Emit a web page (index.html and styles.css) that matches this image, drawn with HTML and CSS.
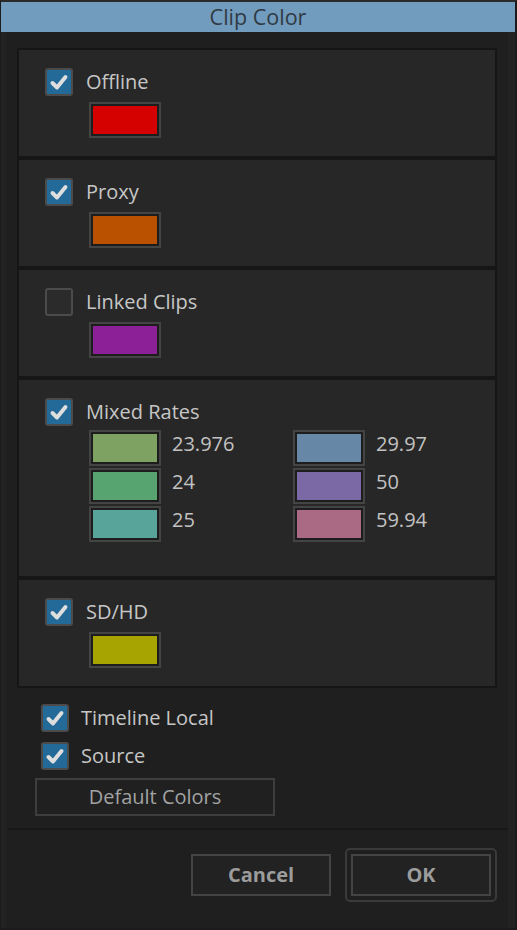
FILE: index.html
```html
<!DOCTYPE html>
<html>
<head>
<meta charset="utf-8">
<link rel="stylesheet" href="styles.css">
</head>
<body>
<div class="window">
  <div class="titlebar">Clip Color</div>
  <div class="body">
    <div class="sections">
      <div class="section">
        <div class="check-row">
          <span class="cb on"><svg viewBox="0 0 24 24"><path d="M5.5 13 L10 17.5 L18.5 7"/></svg></span>
          <span class="label">Offline</span>
        </div>
        <div class="swatch-row"><span class="swatch" style="background:#d50000"></span></div>
      </div>
      <div class="section">
        <div class="check-row">
          <span class="cb on"><svg viewBox="0 0 24 24"><path d="M5.5 13 L10 17.5 L18.5 7"/></svg></span>
          <span class="label">Proxy</span>
        </div>
        <div class="swatch-row"><span class="swatch" style="background:#b95100"></span></div>
      </div>
      <div class="section">
        <div class="check-row">
          <span class="cb"></span>
          <span class="label">Linked Clips</span>
        </div>
        <div class="swatch-row"><span class="swatch" style="background:#8c2097"></span></div>
      </div>
      <div class="section tall">
        <div class="check-row">
          <span class="cb on"><svg viewBox="0 0 24 24"><path d="M5.5 13 L10 17.5 L18.5 7"/></svg></span>
          <span class="label">Mixed Rates</span>
        </div>
        <div class="rates">
          <div class="rate"><span class="swatch" style="background:#7da262"></span><span class="rate-text">23.976</span></div>
          <div class="rate"><span class="swatch" style="background:#6787a7"></span><span class="rate-text">29.97</span></div>
          <div class="rate"><span class="swatch" style="background:#57a470"></span><span class="rate-text">24</span></div>
          <div class="rate"><span class="swatch" style="background:#7b69a6"></span><span class="rate-text">50</span></div>
          <div class="rate"><span class="swatch" style="background:#58a39a"></span><span class="rate-text">25</span></div>
          <div class="rate"><span class="swatch" style="background:#aa6a83"></span><span class="rate-text">59.94</span></div>
        </div>
      </div>
      <div class="section">
        <div class="check-row">
          <span class="cb on"><svg viewBox="0 0 24 24"><path d="M5.5 13 L10 17.5 L18.5 7"/></svg></span>
          <span class="label">SD/HD</span>
        </div>
        <div class="swatch-row"><span class="swatch" style="background:#a7a300"></span></div>
      </div>
    </div>
    <div class="options">
      <div class="check-row opt">
        <span class="cb on"><svg viewBox="0 0 24 24"><path d="M5.5 13 L10 17.5 L18.5 7"/></svg></span>
        <span class="label">Timeline Local</span>
      </div>
      <div class="check-row opt second">
        <span class="cb on"><svg viewBox="0 0 24 24"><path d="M5.5 13 L10 17.5 L18.5 7"/></svg></span>
        <span class="label">Source</span>
      </div>
      <div class="default-btn">Default Colors</div>
    </div>
    <div class="separator"></div>
    <div class="buttons">
      <div class="btn">Cancel</div>
      <div class="ok-ring"><div class="btn">OK</div></div>
    </div>
  </div>
</div>
</body>
</html>
```
FILE: styles.css
```css
* { box-sizing: border-box; }
html, body { margin: 0; padding: 0; }
body {
  background: #1f1f1f;
  font-family: "Open Sans", "Noto Sans", sans-serif;
  width: 517px;
  height: 930px;
  overflow: hidden;
}
.window {
  width: 517px;
  height: 930px;
  border-top: 2px solid #2a2a2a;
  border-left: 1px solid #1b1b1b;
  border-right: 2px solid #1a1a1a;
  border-bottom: 2px solid #1a1a1a;
  display: flex;
  flex-direction: column;
}
.titlebar {
  height: 30px;
  background: #729cbd;
  color: #2f3a45;
  font-size: 21.5px;
  line-height: 30px;
  text-align: center;
}
.body {
  flex: 1;
  background: #1f1f1f;
  border-left: 5px solid #222222;
  border-right: 7px solid #222222;
  padding-top: 16px;
  display: flex;
  flex-direction: column;
}
.sections {
  margin: 0 11px;
  display: flex;
  flex-direction: column;
}
.section {
  height: 110px;
  background: #272727;
  border: 2px solid #161616;
  padding: 18px 0 0 26px;
}
.section.tall { height: 200px; }
.check-row {
  display: flex;
  align-items: center;
  height: 28px;
}
.cb {
  width: 28px;
  height: 28px;
  border: 2px solid #4b4b4b;
  border-radius: 3px;
  background: #2b2b2b;
  display: flex;
  align-items: center;
  justify-content: center;
  flex: none;
}
.cb.on { background: #236a99; }
.cb svg { width: 24px; height: 24px; }
.cb path {
  fill: none;
  stroke: #dedede;
  stroke-width: 3.9;
  stroke-linecap: round;
  stroke-linejoin: round;
}
.label {
  margin-left: 13px;
  font-size: 20px;
  color: #c6c6c6;
  line-height: 28px;
}
.swatch-row {
  margin-top: 6px;
  padding-left: 44px;
  display: flex;
}
.swatch {
  display: block;
  width: 72px;
  height: 36px;
  border: 2px solid #444444;
  box-shadow: inset 0 0 0 2px #1d1d1d;
  flex: none;
}
.rates {
  margin-top: 4px;
  padding-left: 44px;
  display: grid;
  grid-template-columns: 204px 120px;
  row-gap: 2px;
}
.rate {
  display: flex;
  height: 36px;
}
.rate-text {
  margin-left: 11px;
  font-size: 20px;
  line-height: 28px;
  color: #c2c2c2;
}
.options {
  margin-top: 16px;
  padding-left: 29px;
  display: flex;
  flex-direction: column;
}
.check-row.opt { margin-left: 6px; }
.check-row.opt .label { margin-left: 12px; }
.check-row.second { margin-top: 10px; }
.default-btn {
  margin-top: 8px;
  width: 240px;
  height: 38px;
  border: 2px solid #3e3e3e;
  background: #202020;
  color: #a2a2a2;
  font-size: 20px;
  line-height: 34px;
  text-align: center;
}
.separator {
  margin: 12px 0 0 2px;
  height: 2px;
  background: #171717;
}
.buttons {
  margin-top: 18px;
  padding-right: 11px;
  display: flex;
  justify-content: flex-end;
  align-items: center;
  gap: 14px;
}
.btn {
  width: 140px;
  height: 42px;
  border: 2px solid #444444;
  background: #222222;
  color: #9c9c9c;
  font-size: 20px;
  font-weight: 700;
  line-height: 38px;
  text-align: center;
}
.ok-ring {
  border: 2px solid #3a3a3a;
  border-radius: 5px;
  padding: 4px;
}
```
